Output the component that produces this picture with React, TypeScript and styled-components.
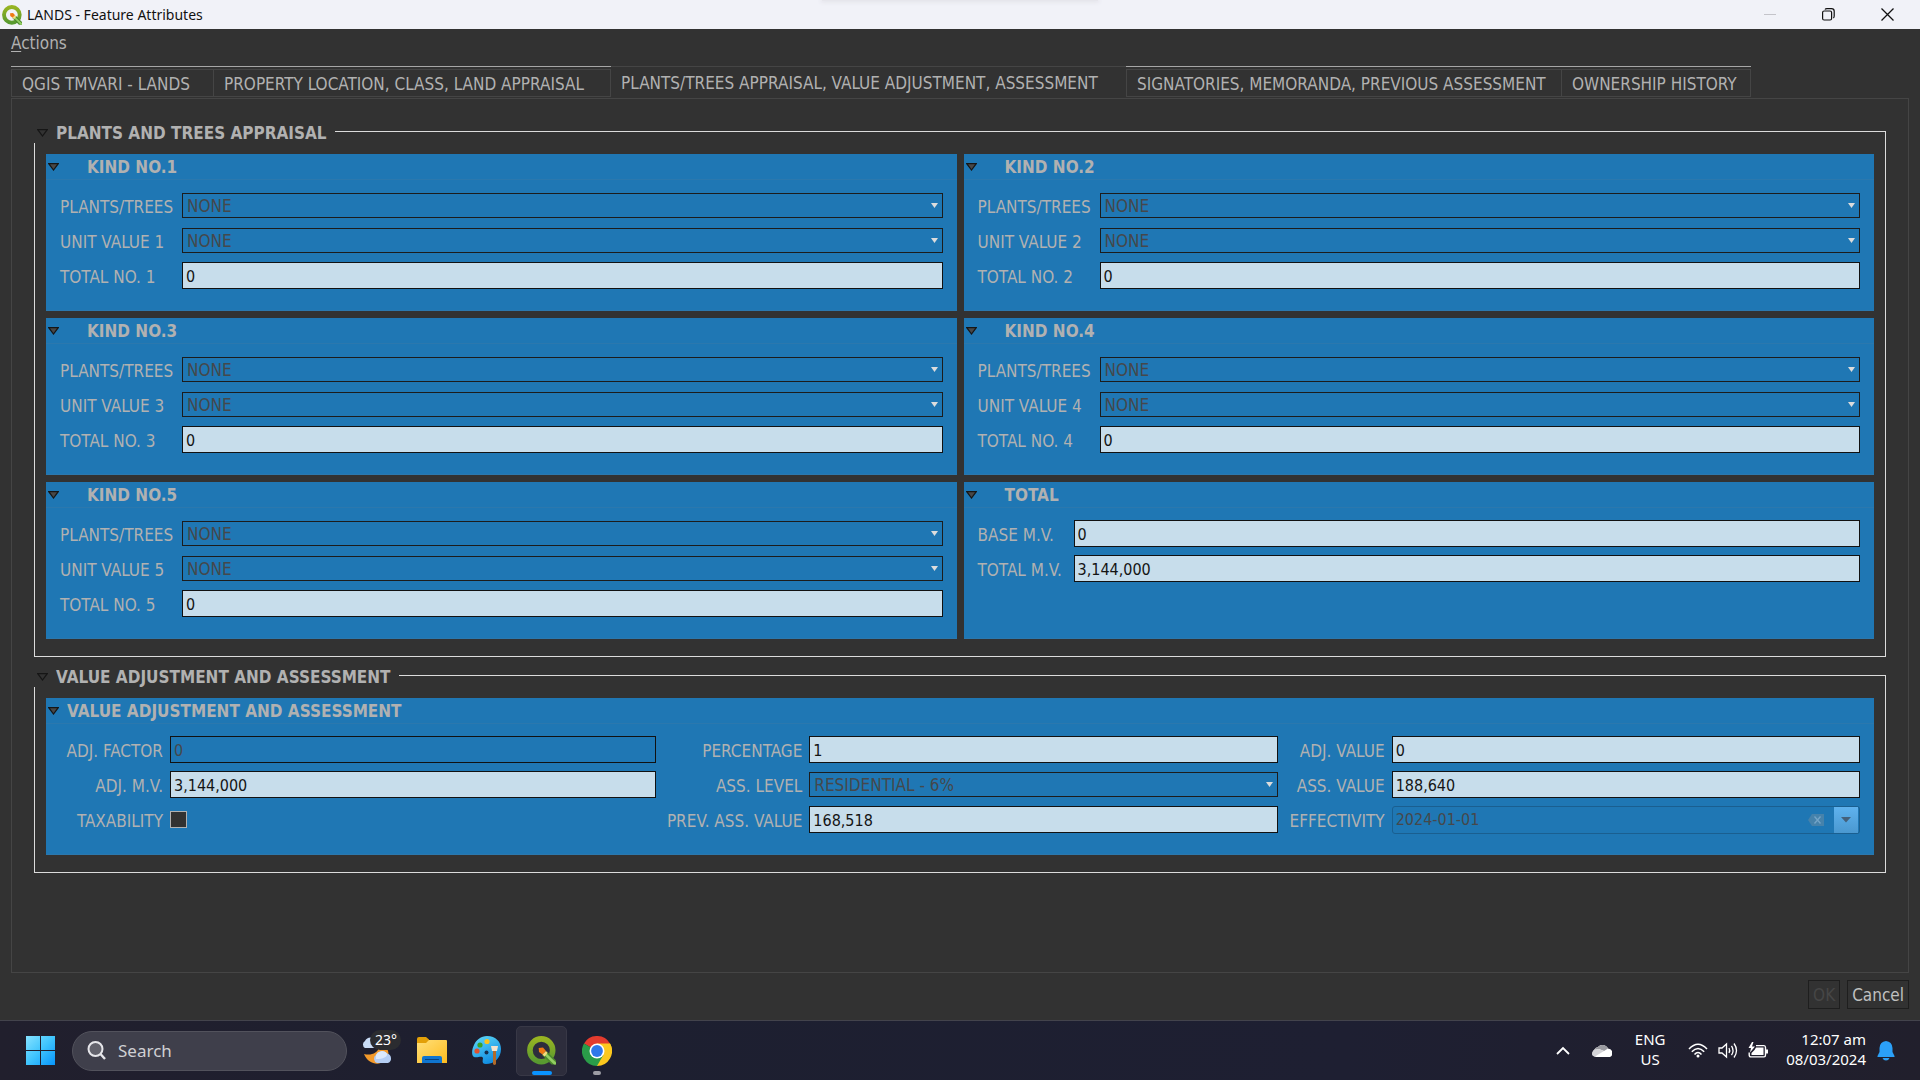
import React, { useId } from 'react';
import styled, { createGlobalStyle, css } from 'styled-components';

const uiFont = '"DejaVu Sans Condensed", "DejaVu Sans", sans-serif';
const shellFont = '"Noto Sans", "Open Sans", sans-serif';

const color = {
  window: '#323232',
  text: '#b1b1b1',
  edge: '#454545',
  frame: '#dcdcdc',
  blue: '#1f77b4',
  blueEdge: '#2b78ae',
  field: '#c7ddeb',
  ink: '#141414',
  disabled: '#45484b',
};

const GlobalStyle = createGlobalStyle`
  *, *::before, *::after { box-sizing: border-box; }
  body { margin: 0; background: ${color.window}; }
  button, input, select { font: inherit; color: inherit; margin: 0; padding: 0; border-radius: 0; }
  button { background: none; border: 0; }
  svg { display: block; flex: none; }
`;

const Screen = styled.div`
  min-height: 100vh;
  display: flex;
  flex-direction: column;
  background: ${color.window};
  color: ${color.text};
  font: 17px/20px ${uiFont};
`;

/* ---------- title bar ---------- */

const TitleBar = styled.header`
  position: relative;
  display: flex;
  align-items: center;
  height: 29px;
  padding: 0 3px 0 2px;
  background: #f1f2f8;
  color: #111;
  font: 14px/20px ${shellFont};
`;

const WindowTitle = styled.h1`
  flex: 1;
  margin: 0 0 0 5px;
  font-size: 14px;
  font-weight: 400;
`;

const SnapHint = styled.span`
  position: absolute;
  top: 0;
  left: 50%;
  width: 276px;
  height: 1px;
  transform: translateX(-50%);
  background: #e6e6ec;
  box-shadow: 0 0 4px 1px #dfdfe6;
`;

const WindowButton = styled.button`
  display: grid;
  place-items: center;
  width: 59px;
  height: 29px;
`;

/* ---------- menu and tabs ---------- */

const MenuBar = styled.nav`
  display: flex;
  height: 37px;
  padding: 4px 11px 0;
  align-items: flex-start;

  u { text-underline-offset: 2px; }
`;

const Main = styled.main`
  flex: 1;
  display: flex;
  flex-direction: column;
  padding: 0 11px 11px;
`;

const TabBar = styled.div`
  display: flex;
  height: 32px;
  padding-bottom: 1px;
`;

const TabLabel = styled.span`
  flex: 1;
  display: flex;
  align-items: center;
  padding: 2px 0 0 10px;
  border: 1px solid ${color.edge};
  border-right-width: 0;
  white-space: nowrap;
`;

const Tab = styled.button<{ $width: number; $selected?: boolean; $closed?: boolean }>`
  display: flex;
  width: ${(p) => p.$width}px;
  padding-top: 2px;
  border-top: 1px solid #a6a6a6;
  text-align: left;

  ${(p) => p.$closed && css`
    ${TabLabel} { border-right-width: 1px; }
  `}
  ${(p) => p.$selected && css`
    padding-top: 0;
    border-top-color: ${color.edge};
    ${TabLabel} { border-width: 0; }
  `}
`;

const Pane = styled.div`
  flex: 1;
  display: flex;
  flex-direction: column;
  gap: 6px;
  padding: 20px 22px;
  border: 1px solid ${color.edge};
`;

const DialogButtons = styled.footer`
  display: flex;
  justify-content: flex-end;
  gap: 7px;
  padding-top: 7px;
`;

const DialogButton = styled.button`
  height: 29px;
  padding: 0 4px;
  border: 1px solid #1e1e1e;
  color: #c0c0c0;
  &:disabled { color: #464646; }
`;

/* ---------- groups ---------- */

const GroupTop = styled.div`
  display: flex;
  height: 24px;
`;

const GroupTitle = styled.button`
  display: flex;
  align-items: center;
  gap: 8px;
  padding: 4px 8px 0 3px;
  font-weight: 700;
`;

const GroupRule = styled.span`
  flex: 1;
  align-self: flex-end;
  height: 12px;
  border: solid ${color.frame};
  border-width: 1px 1px 0 0;
`;

const GroupBody = styled.div`
  padding: 11px 11px 17px;
  border: solid ${color.frame};
  border-width: 0 1px 1px;
`;

const CardGrid = styled.div`
  display: grid;
  grid-template-columns: 1fr 1fr;
  gap: 7px;
`;

const CardBox = styled.section`
  padding-bottom: 21px;
  background: ${color.blue};
  border-bottom: 1px solid ${color.blueEdge};
`;

const CardTitle = styled.button<{ $indent: number }>`
  display: flex;
  align-items: center;
  gap: ${(p) => p.$indent}px;
  width: 100%;
  height: 26px;
  padding-left: 2px;
  border-bottom: 1px solid ${color.blueEdge};
  font-weight: 700;
`;

const FieldGrid = styled.div<{ $columns: string; $alignEnd?: boolean }>`
  display: grid;
  grid-template-columns: ${(p) => p.$columns};
  grid-auto-rows: 27px;
  gap: 8px 7px;
  align-items: center;
  padding: 12px 14px 0;
  text-align: ${(p) => (p.$alignEnd ? 'right' : 'left')};
`;

const Label = styled.label`
  padding-top: 3px;
  white-space: nowrap;
`;

const TextInput = styled.input`
  width: 100%;
  min-width: 0;
  height: 27px;
  padding: 1px 3px 0;
  border: 1px solid #111;
  background: ${color.field};
  color: ${color.ink};
  font-size: 16px;
  outline: 0;

  &:disabled {
    background: transparent;
    color: ${color.disabled};
  }
`;

const SelectBox = styled.div`
  position: relative;
  min-width: 0;

  svg {
    position: absolute;
    right: 5px;
    top: 10px;
    pointer-events: none;
  }
`;

const SelectInput = styled.select`
  display: block;
  appearance: none;
  width: 100%;
  height: 25px;
  padding: 0 4px;
  border: 1px solid #1c1c1c;
  background: transparent;
  &:disabled { color: ${color.disabled}; opacity: 1; }
`;

const TickBox = styled.input`
  appearance: none;
  display: block;
  width: 17px;
  height: 17px;
  border: 1px solid #b1b1b1;
  background: #323232;
`;

const DateBox = styled.div`
  display: flex;
  align-items: center;
  height: 28px;
  padding-right: 1px;
  border: 1px solid #1a5f90;
  border-radius: 3px;
`;

const DateInput = styled.input`
  flex: 1;
  min-width: 0;
  height: 24px;
  padding: 0 3px;
  border: 0;
  background: none;
  font-size: 16px;
  &:disabled { color: ${color.disabled}; }
`;

const ClearButton = styled.button`
  padding-right: 10px;
`;

const DropButton = styled.button`
  display: grid;
  place-items: center;
  width: 24px;
  height: 26px;
  background: linear-gradient(#5fb2ee, #4a98d0);
`;

/* ---------- taskbar ---------- */

const Taskbar = styled.footer`
  display: flex;
  align-items: center;
  height: 60px;
  padding: 0 25px 0 26px;
  border-top: 1px solid #43434c;
  background: linear-gradient(90deg, #211f2d, #1d1f30 30%, #1e1f32 70%, #211f2c);
  color: #fff;
  font: 16px/20px ${shellFont};
`;

const BarButton = styled.button`
  display: grid;
  place-items: center;
`;

const SearchBox = styled.label`
  display: flex;
  align-items: center;
  gap: 12px;
  width: 275px;
  height: 40px;
  margin: 0 4px 0 17px;
  padding: 0 14px;
  border: 1px solid #52525c;
  border-radius: 20px;
  background: #3f3f4b;
`;

const SearchInput = styled.input`
  flex: 1;
  min-width: 0;
  border: 0;
  outline: 0;
  background: none;
  font-size: 17px;
  &::placeholder { color: #d0d0d4; opacity: 1; }
`;

const AppButton = styled.button<{ $active?: boolean }>`
  position: relative;
  display: grid;
  place-items: center;
  width: 51px;
  height: 50px;
  margin-right: 4px;
  border: 1px solid ${(p) => (p.$active ? '#383846' : 'transparent')};
  border-radius: 5px;
  background: ${(p) => (p.$active ? '#2d2d3c' : 'transparent')};
`;

const RunMark = styled.span<{ $active?: boolean }>`
  position: absolute;
  bottom: 0;
  left: 50%;
  width: ${(p) => (p.$active ? 20 : 8)}px;
  height: 4px;
  transform: translateX(-50%);
  border-radius: 2px;
  background: ${(p) => (p.$active ? '#0a93ff' : '#9c9ca4')};
`;

const Temperature = styled.span`
  position: absolute;
  top: 3px;
  right: 0;
  padding: 0 4px 0 5px;
  border-radius: 10px;
  background: #2b2c30;
  font-size: 14px;
`;

const Tray = styled.div`
  display: flex;
  align-items: center;
  gap: 22px;
  margin-left: auto;
`;

const TwoLines = styled.button<{ $align: 'center' | 'right' }>`
  padding-bottom: 4px;
  text-align: ${(p) => p.$align};
  font-size: 15px;
`;

const Status = styled.button`
  display: flex;
  align-items: center;
  gap: 10px;
`;

const LanguageSlot = styled.div`
  display: flex;
  justify-content: center;
  width: 32px;
`;

const ClockSlot = styled.div`
  display: flex;
  align-items: center;
  gap: 11px;
  margin-left: -4px;
`;

/* ---------- drawings ---------- */

const QgisLogo = ({ size }: { size: number }) => (
  <svg width={size} height={size} viewBox="0 0 29 29" aria-hidden="true">
    <defs>
      <linearGradient id={`ring${size}`} x1="0" y1="0" x2="0" y2="1">
        <stop offset="0" stopColor="#97b422" />
        <stop offset="1" stopColor="#589a30" />
      </linearGradient>
    </defs>
    <circle cx="14.300" cy="14.300" r="11.400" fill="none" stroke={`url(#ring${size})`} strokeWidth="5.600" />
    <path d="M15 19 L20 15.500 L29 24.500 V28.600 H24.500 Z" fill="#4c8a2c" />
    <path d="M16.500 18 L18.500 16.500 L29 26.500 V28.600 H27 Z" fill="#93cf62" />
    <path d="M11.700 12 L16 11.500 L19 15 L15.500 18.500 L12 16 Z" fill="#ee7913" />
    <path d="M15.500 18.500 L19 15 L20.500 17 L17.500 20.500 Z" fill="#f7dc7c" />
  </svg>
);

const Triangle = ({ fill }: { fill: string }) => (
  <svg width="11" height="8" viewBox="0 0 11 8" aria-hidden="true">
    <path d="M0.800 0.700 H10.200 L5.500 7 Z" fill={fill} stroke="#161616" strokeWidth="1.200" />
  </svg>
);

const Arrow = () => (
  <svg width="7" height="5" viewBox="0 0 7 5" aria-hidden="true">
    <path d="M0 0 H7 L3.500 5 Z" fill="#dcdcdc" />
  </svg>
);

const WeatherIcon = () => (
  <svg width="32" height="30" viewBox="0 0 32 30" aria-hidden="true">
    <path d="M3 18 C10 20 17 17 18 11 C24 9 29 14 27 20 C24 30 8 31 3 18 Z" fill="#f39a2b" />
    <path d="M4 12 A4 4 0 0 1 4 5 A6 6 0 0 1 15 5 V12 Z" fill="#c9dcf6" />
    <path d="M16 27 A4.500 4.500 0 0 1 15 19 A6.500 6.500 0 0 1 26 17.500 A5 5 0 0 1 27 27 Z" fill="#b4cdf3" />
    <path d="M15 19 A6.500 6.500 0 0 1 26 17.500 C27 21 22 23 15 23 Z" fill="#dbe8fb" />
  </svg>
);

const FolderIcon = () => (
  <svg width="30" height="27" viewBox="0 0 30 27" aria-hidden="true">
    <defs>
      <linearGradient id="folder" x1="0" y1="0" x2="1" y2="1">
        <stop offset="0" stopColor="#ffe07a" />
        <stop offset="1" stopColor="#fdbb1e" />
      </linearGradient>
    </defs>
    <path d="M0 2 Q0 0 2 0 H9 L12 2.500 V9 H0 Z" fill="#e3a008" />
    <path d="M0 6 H9 L12 3 H29 Q30 3 30 4 V26 H0 Z" fill="url(#folder)" />
    <path d="M5 26 V21 Q5 19 7 19 H23 Q25 19 25 21 V26 Z" fill="#1075cf" />
    <rect x="8" y="22" width="14" height="1" fill="#07427f" />
  </svg>
);

const PaintIcon = () => (
  <svg width="29" height="29" viewBox="0 0 29 29" aria-hidden="true">
    <defs>
      <linearGradient id="palette" x1="0" y1="0" x2="0.500" y2="1">
        <stop offset="0" stopColor="#62dcf8" />
        <stop offset="1" stopColor="#128ee2" />
      </linearGradient>
    </defs>
    <path d="M15 0 C24 0 29 6 29 13 C29 22 22 28 14 28 C9 28 11 24 11 22 C10 19 6 22 2 21 C-1 19 0 13 2 9 C4 4 9 0 15 0 Z" fill="url(#palette)" />
    <circle cx="15" cy="5.500" r="2.600" fill="#fbc21b" />
    <circle cx="8" cy="9" r="2.600" fill="#38a12a" />
    <circle cx="5" cy="15" r="2.600" fill="#e0512c" />
    <circle cx="14.500" cy="16.500" r="2" fill="#14304f" />
    <path d="M19 10 H26 L25 15 H20 Z" fill="#f3e3cd" />
    <path d="M21 15 H24 V28 Q22.500 30 21 28 Z" fill="#b06a2a" />
  </svg>
);

const ChromeIcon = () => (
  <svg width="30" height="30" viewBox="0 0 30 30" aria-hidden="true">
    <path d="M15 15 L2 7.500 A15 15 0 0 1 28 7.500 Z" fill="#e33b2e" />
    <path d="M15 15 L2 7.500 A15 15 0 0 0 15 30 Z" fill="#2a9c49" />
    <path d="M15 15 V30 A15 15 0 0 0 28 7.500 Z" fill="#fcc81e" />
    <path d="M15 7.500 H28 A15 15 0 0 1 30 15 L15 15 Z" fill="#fcc81e" />
    <path d="M8.500 18.800 L2 7.500 L12 20 L21.500 18.800 L15 30 Z" fill="#2a9c49" />
    <circle cx="15" cy="15" r="7.500" fill="#fff" />
    <circle cx="15" cy="15" r="5.900" fill="#2f78ea" />
  </svg>
);

/* ---------- form parts ---------- */

const TextField = ({ label, value, disabled }: { label: string; value: string; disabled?: boolean }) => {
  const id = useId();
  return (
    <>
      <Label htmlFor={id}>{label}</Label>
      <TextInput id={id} defaultValue={value} disabled={disabled} />
    </>
  );
};

const SelectField = ({ label, value }: { label: string; value: string }) => {
  const id = useId();
  return (
    <>
      <Label htmlFor={id}>{label}</Label>
      <SelectBox>
        <SelectInput id={id} disabled>
          <option>{value}</option>
        </SelectInput>
        <Arrow />
      </SelectBox>
    </>
  );
};

const Card = ({ title, indent = 28, children }: { title: string; indent?: number; children: React.ReactNode }) => (
  <CardBox>
    <CardTitle $indent={indent} aria-expanded="true">
      <Triangle fill="#484848" />
      {title}
    </CardTitle>
    {children}
  </CardBox>
);

const Group = ({ title, children }: { title: string; children: React.ReactNode }) => (
  <section>
    <GroupTop>
      <GroupTitle aria-expanded="true">
        <Triangle fill="none" />
        {title}
      </GroupTitle>
      <GroupRule />
    </GroupTop>
    <GroupBody>{children}</GroupBody>
  </section>
);

const tabs = [
  { name: 'QGIS TMVARI - LANDS', width: 202 },
  { name: 'PROPERTY LOCATION, CLASS, LAND APPRAISAL', width: 398, closed: true },
  { name: 'PLANTS/TREES APPRAISAL, VALUE ADJUSTMENT, ASSESSMENT', width: 515, selected: true },
  { name: 'SIGNATORIES, MEMORANDA, PREVIOUS ASSESSMENT', width: 435 },
  { name: 'OWNERSHIP HISTORY', width: 190, closed: true },
];

export default function App() {
  const taxId = useId();
  const dateId = useId();

  return (
    <Screen>
      <GlobalStyle />
      <TitleBar>
        <QgisLogo size={20} />
        <WindowTitle>LANDS - Feature Attributes</WindowTitle>
        <SnapHint />
        <WindowButton aria-label="Minimize" disabled>
          <svg width="12" height="12" viewBox="0 0 12 12"><path d="M0 5.500 H12" stroke="#c4c4ca" /></svg>
        </WindowButton>
        <WindowButton aria-label="Restore">
          <svg width="13" height="13" viewBox="0 0 13 13" fill="none" stroke="#111" strokeWidth="1.200">
            <rect x="0.600" y="3" width="9" height="9" rx="1.500" />
            <path d="M3 1.500 Q3.500 0.600 5 0.600 H9.500 Q12.200 0.600 12.200 3.200 V8 Q12.200 9.500 11.300 10" />
          </svg>
        </WindowButton>
        <WindowButton aria-label="Close">
          <svg width="13" height="13" viewBox="0 0 13 13"><path d="M0.500 0.500 L12.500 12.500 M12.500 0.500 L0.500 12.500" stroke="#111" strokeWidth="1.300" /></svg>
        </WindowButton>
      </TitleBar>

      <MenuBar>
        <button><u>A</u>ctions</button>
      </MenuBar>

      <Main>
        <TabBar role="tablist">
          {tabs.map((t) => (
            <Tab key={t.name} role="tab" aria-selected={!!t.selected} $width={t.width} $selected={t.selected} $closed={t.closed}>
              <TabLabel>{t.name}</TabLabel>
            </Tab>
          ))}
        </TabBar>

        <Pane role="tabpanel">
          <Group title="PLANTS AND TREES APPRAISAL">
            <CardGrid>
              {[1, 2, 3, 4, 5].map((n) => (
                <Card key={n} title={`KIND NO.${n}`}>
                  <FieldGrid $columns="115px 1fr">
                    <SelectField label="PLANTS/TREES" value="NONE" />
                    <SelectField label={`UNIT VALUE ${n}`} value="NONE" />
                    <TextField label={`TOTAL NO. ${n}`} value="0" />
                  </FieldGrid>
                </Card>
              ))}
              <Card title="TOTAL">
                <FieldGrid $columns="89px 1fr">
                  <TextField label="BASE M.V." value="0" />
                  <TextField label="TOTAL M.V." value="3,144,000" />
                </FieldGrid>
              </Card>
            </CardGrid>
          </Group>

          <Group title="VALUE ADJUSTMENT AND ASSESSMENT">
            <Card title="VALUE ADJUSTMENT AND ASSESSMENT" indent={8}>
              <FieldGrid $columns="103px 27fr 139px 26fr 100px 26fr" $alignEnd>
                <TextField label="ADJ. FACTOR" value="0" disabled />
                <TextField label="PERCENTAGE" value="1" />
                <TextField label="ADJ. VALUE" value="0" />
                <TextField label="ADJ. M.V." value="3,144,000" />
                <SelectField label="ASS. LEVEL" value="RESIDENTIAL - 6%" />
                <TextField label="ASS. VALUE" value="188,640" />
                <Label htmlFor={taxId}>TAXABILITY</Label>
                <TickBox id={taxId} type="checkbox" />
                <TextField label="PREV. ASS. VALUE" value="168,518" />
                <Label htmlFor={dateId}>EFFECTIVITY</Label>
                <DateBox>
                  <DateInput id={dateId} defaultValue="2024-01-01" disabled />
                  <ClearButton aria-label="Clear date" disabled>
                    <svg width="16" height="12" viewBox="0 0 16 12">
                      <path d="M4 0 H16 V12 H4 L0 6 Z" fill="#4682ab" />
                      <path d="M6.500 2.500 L12.500 9.500 M12.500 2.500 L6.500 9.500" stroke="#74a5c8" strokeWidth="1.300" />
                    </svg>
                  </ClearButton>
                  <DropButton aria-label="Open calendar" disabled>
                    <svg width="10" height="6" viewBox="0 0 10 6"><path d="M0 0 H10 L5 5.500 Z" fill="#44607a" /></svg>
                  </DropButton>
                </DateBox>
              </FieldGrid>
            </Card>
          </Group>
        </Pane>

        <DialogButtons>
          <DialogButton disabled>OK</DialogButton>
          <DialogButton>Cancel</DialogButton>
        </DialogButtons>
      </Main>

      <Taskbar>
        <BarButton aria-label="Start">
          <svg width="29" height="29" viewBox="0 0 29 29">
            <defs>
              <linearGradient id="start" gradientUnits="userSpaceOnUse" x1="0" y1="0" x2="29" y2="29">
                <stop offset="0" stopColor="#86e2ff" />
                <stop offset="0.500" stopColor="#3fc4fd" />
                <stop offset="1" stopColor="#0795fb" />
              </linearGradient>
            </defs>
            <path d="M0 0 H14 V14 H0 Z M15 0 H29 V14 H15 Z M0 15 H14 V29 H0 Z M15 15 H29 V29 H15 Z" fill="url(#start)" />
          </svg>
        </BarButton>
        <SearchBox>
          <svg width="19" height="19" viewBox="0 0 19 19" fill="none" stroke="#e6e6ea" strokeWidth="2">
            <circle cx="8.500" cy="8" r="7" fill="#62626c" />
            <path d="M13.500 13 L18 18" strokeWidth="2.400" />
          </svg>
          <SearchInput placeholder="Search" aria-label="Search" />
        </SearchBox>
        <AppButton aria-label="Weather">
          <WeatherIcon />
          <Temperature>23°</Temperature>
        </AppButton>
        <AppButton aria-label="File Explorer"><FolderIcon /></AppButton>
        <AppButton aria-label="Paint"><PaintIcon /></AppButton>
        <AppButton aria-label="QGIS" $active><QgisLogo size={29} /><RunMark $active /></AppButton>
        <AppButton aria-label="Chrome"><ChromeIcon /><RunMark /></AppButton>
        <Tray>
          <BarButton aria-label="Hidden icons">
            <svg width="14" height="9" viewBox="0 0 14 9"><path d="M1 8 L7 2 L13 8" fill="none" stroke="#fff" strokeWidth="1.800" /></svg>
          </BarButton>
          <BarButton aria-label="OneDrive">
            <svg width="20" height="14" viewBox="0 0 20 14">
              <path d="M4 13 A4 4 0 0 1 2 6 A5 5 0 0 1 6 3 A6 6 0 0 1 16 4.500 A4.500 4.500 0 0 1 18 13 Z" fill="#fff" />
              <path d="M2 6 A5 5 0 0 1 6 3 A6 6 0 0 1 16 4.500 L12 7 L7 5 Z" fill="#9a9aa0" />
              <path d="M0 10 Q0 7 3 5.500 L7 5 L12 7 L3 12.500 Q0 12 0 10 Z" fill="#d4d4d8" />
            </svg>
          </BarButton>
          <LanguageSlot>
            <TwoLines $align="center">ENG<br />US</TwoLines>
          </LanguageSlot>
          <Status aria-label="Network, sound and battery">
            <svg width="20" height="15" viewBox="0 0 20 15" fill="none" stroke="#fff" strokeWidth="1.500">
              <path d="M1 6 Q10 -3.500 19 6" />
              <path d="M3.800 8.800 Q10 2 16.200 8.800" />
              <path d="M6.500 11.500 Q10 7.500 13.500 11.500" />
              <circle cx="10" cy="13" r="1.500" fill="#fff" stroke="none" />
            </svg>
            <svg width="20" height="17" viewBox="0 0 20 17" fill="none" stroke="#fff" strokeWidth="1.300">
              <path d="M1 6 H4 L8.500 2 V15 L4 11 H1 Z" />
              <path d="M11 6 Q12.500 8.500 11 11" />
              <path d="M13.500 3.800 Q16.500 8.500 13.500 13.200" />
              <path d="M16 1.500 Q21 8.500 16 15.500" />
            </svg>
            <svg width="20" height="17" viewBox="0 0 20 17" aria-hidden="true">
              <path d="M8 3.600 H16 Q17.500 3.600 17.500 5.500 V13 Q17.500 14.900 16 14.900 H3 Q1.200 14.900 1.200 13 V10.500" fill="none" stroke="#fff" strokeWidth="1.400" />
              <path d="M8 5.500 H15.500 V13 H3.500 V11 L6.500 8 Z M18 7.500 H20 V11.500 H18 Z" fill="#fff" />
              <path d="M4 0 L0.500 6 H3 L2 10.500 L7 4.500 H4 L5.500 0 Z" fill="#fff" />
            </svg>
          </Status>
          <ClockSlot>
            <TwoLines $align="right">12:07 am<br />08/03/2024</TwoLines>
            <BarButton aria-label="Notifications">
              <svg width="18" height="20" viewBox="0 0 18 20">
                <path d="M9 0 Q15 0.500 15.500 7 V11 L17.500 15 V16 H0.500 V15 L2.500 11 V7 Q3 0.500 9 0 Z" fill="#2ba0f8" />
                <path d="M5.500 17 H12.500 Q11.500 19.500 9 19.500 Q6.500 19.500 5.500 17 Z" fill="#2ba0f8" />
              </svg>
            </BarButton>
          </ClockSlot>
        </Tray>
      </Taskbar>
    </Screen>
  );
}
